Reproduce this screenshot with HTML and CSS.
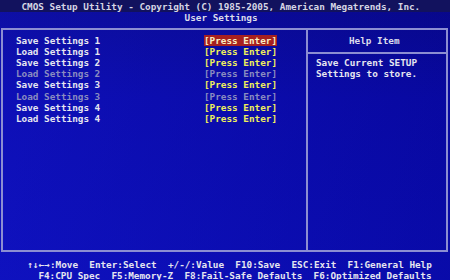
FILE: index.html
```html
<!DOCTYPE html>
<html lang="en">
<head>
    <meta charset="UTF-8">
    <title>CMOS Setup Utility - User Settings</title>
    <link rel="stylesheet" href="styles.css">
</head>
<body>
    <div class="screen">
        <div class="title">CMOS Setup Utility - Copyright (C) 1985-2005, American Megatrends, Inc.</div>
        <div class="subtitle">User Settings</div>

        <div class="frame">
            <div class="items">
                <div class="row"><span class="label">Save Settings 1</span><span class="value selected">[Press Enter]</span></div>
                <div class="row"><span class="label">Load Settings 1</span><span class="value">[Press Enter]</span></div>
                <div class="row"><span class="label">Save Settings 2</span><span class="value">[Press Enter]</span></div>
                <div class="row off"><span class="label">Load Settings 2</span><span class="value">[Press Enter]</span></div>
                <div class="row"><span class="label">Save Settings 3</span><span class="value">[Press Enter]</span></div>
                <div class="row off"><span class="label">Load Settings 3</span><span class="value">[Press Enter]</span></div>
                <div class="row"><span class="label">Save Settings 4</span><span class="value">[Press Enter]</span></div>
                <div class="row"><span class="label">Load Settings 4</span><span class="value">[Press Enter]</span></div>
            </div>
            <div class="help">
                <div class="help-title">Help Item</div>
                <div class="help-text">Save Current SETUP<br>Settings to store.</div>
            </div>
        </div>

        <div class="keys">
            <div class="keys-line first">↑↓←→:Move  Enter:Select  +/-/:Value  F10:Save  ESC:Exit  F1:General Help</div>
            <div class="keys-line second">F4:CPU Spec  F5:Memory-Z  F8:Fail-Safe Defaults  F6:Optimized Defaults</div>
        </div>
    </div>
</body>
</html>
```

FILE: styles.css
```css
* {
    margin: 0;
    padding: 0;
    box-sizing: border-box;
}

body {
    background: #0a0aa6;
    overflow: hidden;
}

/* 80 x 25 text screen, each cell 5.625 x 11.2 */
.screen {
    width: 450px;
    height: 280px;
    font-family: "DejaVu Sans Mono", "Liberation Mono", monospace;
    font-size: 9.34px;
    font-weight: bold;
    line-height: 11.2px;
    color: #e6e6f0;
    background: linear-gradient(90deg, rgba(20, 24, 200, 0.35), rgba(0, 0, 120, 0.25)),
                linear-gradient(180deg, #0a0a8e 0%, #0b0bae 35%, #0c0eba 100%);
}

.title {
    height: 12.2px;
    padding: 1px 0 0 21.5px;
    background: #12125e;
    color: #d6d6e4;
    white-space: pre;
}

.subtitle {
    height: 11.2px;
    padding-left: 184.6px;
    color: #dcdcea;
}

/* Main box */
.frame {
    display: grid;
    grid-template-columns: 303px 140px;
    height: 223.6px;
    margin: 5px 2px 0 1px;
    border: 2px solid #8c8ed2;
}

.items {
    padding: 4.2px 0 0 13px;
}

.row {
    display: flex;
    height: 11.2px;
    white-space: pre;
}

.label {
    width: 188px;
}

.value {
    color: #f0f05a;
}

.value.selected {
    background: #a62020;
    color: #f8eec4;
}

.row.off .label,
.row.off .value {
    color: #8a8cc0;
}

/* Help panel */
.help {
    border-left: 2px solid #8c8ed2;
}

.help-title {
    padding: 4.2px 0 6px 41px;
    border-bottom: 2px solid #8c8ed2;
    color: #dcdcec;
}

.help-text {
    padding: 3.4px 0 0 8px;
    white-space: nowrap;
}

/* Key legend */
.keys {
    margin-top: 6.6px;
}

.keys-line {
    height: 11.2px;
    white-space: pre;
}

.keys-line.first {
    padding-left: 27.5px;
}

.keys-line.second {
    padding-left: 38.4px;
}
```
